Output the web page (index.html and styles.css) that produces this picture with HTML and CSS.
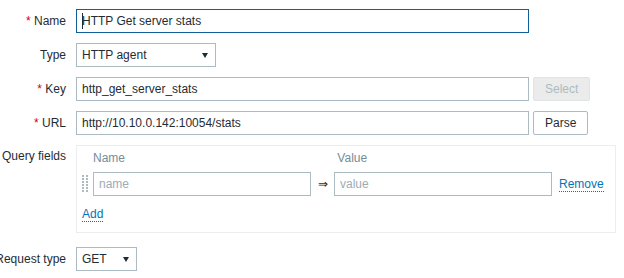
FILE: index.html
```html
<!DOCTYPE html>
<html lang="en">
<head>
    <meta charset="UTF-8">
    <meta name="viewport" content="width=device-width, initial-scale=1.0">
    <title>Item</title>
    <link rel="stylesheet" href="styles.css">
</head>
<body>

    <!-- Item form -->
    <div class="form-list">
        <div class="row">
            <label class="label"><span class="req">*</span>&nbsp;Name</label>
            <div class="field">
                <div class="caret-wrap">
                    <input type="text" class="text wide focused" value="HTTP Get server stats">
                </div>
            </div>
        </div>

        <div class="row">
            <label class="label">Type</label>
            <div class="field">
                <div class="select type-select">HTTP agent</div>
            </div>
        </div>

        <div class="row">
            <label class="label"><span class="req">*</span>&nbsp;Key</label>
            <div class="field">
                <input type="text" class="text wide" value="http_get_server_stats">
                <button class="btn" disabled>Select</button>
            </div>
        </div>

        <div class="row">
            <label class="label"><span class="req">*</span>&nbsp;URL</label>
            <div class="field">
                <input type="text" class="text wide" value="http://10.10.0.142:10054/stats">
                <button class="btn">Parse</button>
            </div>
        </div>

        <div class="row row-query">
            <label class="label label-top">Query fields</label>
            <div class="field">
                <div class="query-box">
                    <div class="query-head">
                        <span class="head-name">Name</span>
                        <span class="head-value">Value</span>
                    </div>
                    <div class="query-row">
                        <span class="drag">
                            <svg width="6" height="18" viewBox="0 0 6 18">
                                <rect x="0" y="0" width="2" height="2"/><rect x="4" y="0" width="2" height="2"/>
                                <rect x="0" y="3" width="2" height="2"/><rect x="4" y="3" width="2" height="2"/>
                                <rect x="0" y="6" width="2" height="2"/><rect x="4" y="6" width="2" height="2"/>
                                <rect x="0" y="9" width="2" height="2"/><rect x="4" y="9" width="2" height="2"/>
                                <rect x="0" y="12" width="2" height="2"/><rect x="4" y="12" width="2" height="2"/>
                                <rect x="0" y="15" width="2" height="2"/><rect x="4" y="15" width="2" height="2"/>
                            </svg>
                        </span>
                        <input type="text" class="text query-input" placeholder="name">
                        <span class="pair-arrow">&rArr;</span>
                        <input type="text" class="text query-input" placeholder="value">
                        <a href="#" class="link remove-link">Remove</a>
                    </div>
                    <div class="query-add">
                        <a href="#" class="link">Add</a>
                    </div>
                </div>
            </div>
        </div>

        <div class="row">
            <label class="label">Request type</label>
            <div class="field">
                <div class="select method-select">GET</div>
            </div>
        </div>
    </div>

</body>
</html>
```

FILE: styles.css
```css
/* Base */
body {
    margin: 0;
    padding-top: 9px;
    background: #fff;
    font-family: 'Liberation Sans', Arial, sans-serif;
    font-size: 12px;
    line-height: 14px;
    color: #1f2c33;
    overflow: hidden;
}

/* Rows of the form */
.row {
    display: flex;
    margin-bottom: 10px;
}

.row-query {
    margin-bottom: 14px;
}

.label {
    width: 66px;
    flex-shrink: 0;
    display: flex;
    justify-content: flex-end;
    white-space: nowrap;
    line-height: 24px;
}

.label-top {
    line-height: 14px;
    padding-top: 4px;
}

.req {
    color: #d40000;
}

.field {
    margin-left: 10px;
    display: flex;
    align-items: flex-start;
}

/* Text inputs */
.text {
    box-sizing: border-box;
    height: 24px;
    margin: 0;
    padding: 0 5px;
    border: 1px solid #acbbc2;
    border-radius: 0;
    background: #fff;
    font-family: 'Liberation Sans', Arial, sans-serif;
    font-size: 12px;
    color: #1f2c33;
    outline: none;
}

.text::placeholder {
    color: #9eacb3;
}

.wide {
    width: 453px;
}

.focused {
    border-color: #0f5f99;
}

/* Cursor shown in the focused field */
.caret-wrap {
    position: relative;
}

.caret-wrap::after {
    content: "";
    position: absolute;
    left: 6px;
    top: 4px;
    width: 1px;
    height: 16px;
    background: #1f2c33;
}

/* Selects */
.select {
    box-sizing: border-box;
    height: 24px;
    display: flex;
    align-items: center;
    justify-content: space-between;
    padding: 0 7px 0 5px;
    border: 1px solid #acbbc2;
    background: #fff;
}

.select::after {
    content: "";
    width: 0;
    height: 0;
    border-left: 3px solid transparent;
    border-right: 3px solid transparent;
    border-top: 5px solid #1f2c33;
}

.type-select {
    width: 140px;
}

.method-select {
    width: 61px;
}

/* Buttons */
.btn {
    box-sizing: border-box;
    height: 24px;
    margin-left: 4px;
    padding: 0 11px;
    border: 1px solid #acbbc2;
    border-radius: 2px;
    background: #fff;
    font-family: 'Liberation Sans', Arial, sans-serif;
    font-size: 12px;
    color: #1f2c33;
}

.btn:disabled {
    background: #ebebeb;
    border-color: #dfe4e7;
    color: #acbbc2;
}

/* Query fields table */
.query-box {
    box-sizing: border-box;
    width: 540px;
    padding: 5px 10px 11px 5px;
    border: 1px solid #ebeef0;
}

.query-head {
    margin-left: 11px;
    margin-bottom: 7px;
    color: #768d99;
}

.head-name {
    display: inline-block;
    width: 241px;
}

.query-row {
    display: flex;
    align-items: center;
    height: 24px;
}

.drag {
    display: flex;
    width: 6px;
    margin-right: 5px;
    fill: #acbbc2;
}

.query-input {
    width: 218px;
}

.pair-arrow {
    width: 23px;
    text-align: center;
    color: #1f2c33;
}

.remove-link {
    margin-left: 7px;
}

.query-add {
    margin-top: 11px;
}

/* Links */
.link {
    color: #0275b8;
    text-decoration: none;
    border-bottom: 1px dotted #0275b8;
}
```
